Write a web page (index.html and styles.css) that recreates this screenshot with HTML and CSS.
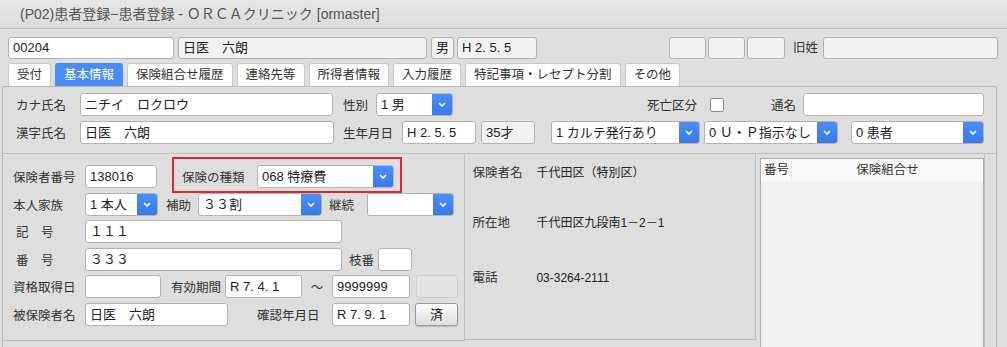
FILE: index.html
```html
<!DOCTYPE html>
<html lang="ja">
<head>
    <meta charset="UTF-8">
    <title>(P02)患者登録−患者登録 - ＯＲＣＡクリニック [ormaster]</title>
    <link rel="stylesheet" href="styles.css">
</head>
<body>
    <div class="titlebar">(P02)患者登録−患者登録 - ＯＲＣＡクリニック [ormaster]</div>

    <div class="head-row">
        <div class="field w166">00204</div>
        <div class="field ro w249 ml4">日医　六朗</div>
        <div class="field ro w23 ml4 center">男</div>
        <div class="field ro w80 ml3">H 2. 5. 5</div>
        <div class="field ro w37 ml132"></div>
        <div class="field ro w37 ml2"></div>
        <div class="field ro w38 ml2"></div>
        <div class="label ml8 w30">旧姓</div>
        <div class="field ro w175"></div>
    </div>

    <div class="tabs">
        <div class="tab">受付</div>
        <div class="tab active">基本情報</div>
        <div class="tab">保険組合せ履歴</div>
        <div class="tab">連絡先等</div>
        <div class="tab">所得者情報</div>
        <div class="tab">入力履歴</div>
        <div class="tab">特記事項・レセプト分割</div>
        <div class="tab">その他</div>
    </div>

    <div class="panel">
        <div class="top-section">
            <div class="row">
                <div class="label w64">カナ氏名</div>
                <div class="field w253">ニチイ　ロクロウ</div>
                <div class="label ml10 w33">性別</div>
                <div class="select w77"><span class="val">1 男</span><span class="btn"><svg width="8" height="5" viewBox="0 0 8 5"><path d="M1 1 L4 4 L7 1" /></svg></span></div>
                <div class="label ml194 w48">死亡区分</div>
                <div class="check ml15"></div>
                <div class="label ml47 w32">通名</div>
                <div class="field w181"></div>
            </div>
            <div class="row">
                <div class="label w64">漢字氏名</div>
                <div class="field w254">日医　六朗</div>
                <div class="label ml9 w59">生年月日</div>
                <div class="field w74">H 2. 5. 5</div>
                <div class="field ro w54 ml5">35才</div>
                <div class="select w149 ml16"><span class="val">1 カルテ発行あり</span><span class="btn"><svg width="8" height="5" viewBox="0 0 8 5"><path d="M1 1 L4 4 L7 1" /></svg></span></div>
                <div class="select w134 ml4"><span class="val">0 Ｕ・Ｐ指示なし</span><span class="btn"><svg width="8" height="5" viewBox="0 0 8 5"><path d="M1 1 L4 4 L7 1" /></svg></span></div>
                <div class="select w133 ml13"><span class="val">0 患者</span><span class="btn"><svg width="8" height="5" viewBox="0 0 8 5"><path d="M1 1 L4 4 L7 1" /></svg></span></div>
            </div>
        </div>

        <div class="bottom-section">
            <div class="pane-left">
                <div class="row">
                    <div class="label w72">保険者番号</div>
                    <div class="field w72">138016</div>
                    <div class="highlight">
                        <div class="label w75">保険の種類</div>
                        <div class="select w137"><span class="val">068 特療費</span><span class="btn"><svg width="8" height="5" viewBox="0 0 8 5"><path d="M1 1 L4 4 L7 1" /></svg></span></div>
                    </div>
                </div>
                <div class="row">
                    <div class="label w72">本人家族</div>
                    <div class="select w73"><span class="val">1 本人</span><span class="btn"><svg width="8" height="5" viewBox="0 0 8 5"><path d="M1 1 L4 4 L7 1" /></svg></span></div>
                    <div class="label ml8 w32">補助</div>
                    <div class="select w124"><span class="val">３３割</span><span class="btn"><svg width="8" height="5" viewBox="0 0 8 5"><path d="M1 1 L4 4 L7 1" /></svg></span></div>
                    <div class="label ml7 w38">継続</div>
                    <div class="select w87"><span class="val"></span><span class="btn"><svg width="8" height="5" viewBox="0 0 8 5"><path d="M1 1 L4 4 L7 1" /></svg></span></div>
                </div>
                <div class="row">
                    <div class="label w72 indent">記　号</div>
                    <div class="field w257">１１１</div>
                </div>
                <div class="row">
                    <div class="label w72 indent">番　号</div>
                    <div class="field w257">３３３</div>
                    <div class="label ml7 w29">枝番</div>
                    <div class="field w34"></div>
                </div>
                <div class="row">
                    <div class="label w72">資格取得日</div>
                    <div class="field w76"></div>
                    <div class="label ml10 w54">有効期間</div>
                    <div class="field w77">R 7. 4. 1</div>
                    <div class="label w30 center">～</div>
                    <div class="field w78">9999999</div>
                    <div class="field off w42 ml6"></div>
                </div>
                <div class="row">
                    <div class="label w72">被保険者名</div>
                    <div class="field w143">日医　六朗</div>
                    <div class="label ml29 w75">確認年月日</div>
                    <div class="field w78">R 7. 9. 1</div>
                    <div class="button ml5 w43">済</div>
                </div>
            </div>

            <div class="pane-mid">
                <div class="info first">
                    <div class="info-label">保険者名</div>
                    <div class="info-value">千代田区（特別区）</div>
                </div>
                <div class="info second">
                    <div class="info-label">所在地</div>
                    <div class="info-value">千代田区九段南1－2－1</div>
                </div>
                <div class="info third">
                    <div class="info-label">電話</div>
                    <div class="info-value">03-3264-2111</div>
                </div>
            </div>

            <div class="pane-right">
                <div class="combo-table">
                    <div class="combo-head">
                        <div class="col-no">番号</div>
                        <div class="col-name">保険組合せ</div>
                    </div>
                    <div class="combo-body"></div>
                </div>
            </div>
        </div>
    </div>
</body>
</html>
```

FILE: styles.css
```css
body {
    margin: 0;
    width: 1007px;
    height: 347px;
    overflow: hidden;
    background-color: #dedede;
    color: #333;
    font-family: "Liberation Sans", "Noto Sans CJK JP", sans-serif;
    font-size: 12.5px;
}

.titlebar {
    height: 28px;
    line-height: 28px;
    padding-left: 20px;
    font-size: 14px;
    color: #555;
    background: linear-gradient(#e6e6e6, #dcdcdc);
    border-bottom: 1px solid #c2c2c2;
}

.head-row {
    display: flex;
    height: 22px;
    margin-top: 8px;
    padding-left: 8px;
}

.row {
    display: flex;
    align-items: center;
    height: 23px;
}

.label {
    flex: none;
    white-space: nowrap;
    color: #333;
}
.indent { padding-left: 3px; box-sizing: border-box; }
.center { text-align: center; }

.field {
    flex: none;
    box-sizing: border-box;
    height: 23px;
    line-height: 21px;
    padding: 0 4px;
    background: #fff;
    border: 1px solid #b3b3b3;
    border-radius: 3px;
    color: #222;
    font-size: 13px;
    white-space: nowrap;
    overflow: hidden;
}
.head-row .field { height: 22px; line-height: 20px; }
.head-row .label { line-height: 22px; }
.field.ro { background: #f1f1f1; }
.field.off { background: #e4e4e4; border-color: #cdcdcd; }
.field.center { text-align: center; padding: 0; }

.select {
    flex: none;
    display: flex;
    box-sizing: border-box;
    height: 23px;
    background: #fff;
    border: 1px solid #b3b3b3;
    border-radius: 3px;
    overflow: hidden;
}
.select .val {
    flex: 1;
    padding-left: 4px;
    line-height: 21px;
    color: #222;
    font-size: 13px;
    white-space: nowrap;
    overflow: hidden;
}
.select .btn {
    flex: none;
    width: 20px;
    display: flex;
    align-items: center;
    justify-content: center;
    background: linear-gradient(#4b8ff7, #3779ea);
}
.select .btn path {
    fill: none;
    stroke: #fff;
    stroke-width: 1.6;
}

.check {
    flex: none;
    width: 14px;
    height: 14px;
    box-sizing: border-box;
    background: #fff;
    border: 1px solid #8c8c8c;
    border-radius: 2px;
}

.button {
    flex: none;
    box-sizing: border-box;
    height: 23px;
    line-height: 21px;
    text-align: center;
    background: linear-gradient(#fdfdfd, #dedede);
    border: 1px solid #9c9c9c;
    border-radius: 3px;
    box-shadow: 0 1px 1px rgba(0, 0, 0, 0.15);
    color: #222;
    font-size: 13px;
}

/* tabs */
.tabs {
    display: flex;
    gap: 4px;
    margin-top: 4px;
    padding-left: 8px;
}
.tab {
    height: 22px;
    line-height: 22px;
    padding: 0 8px;
    background: #fff;
    border: 1px solid #c8c8c8;
    border-bottom: none;
    border-radius: 3px 3px 0 0;
    color: #333;
}
.tab.active {
    background: #4a8cf5;
    border-color: #4a8cf5;
    color: #fff;
}

/* main panel */
.panel {
    margin: 0 10px 0 2px;
    height: 270px;
    border: 1px solid #bababa;
    border-bottom: none;
    border-radius: 3px 3px 0 0;
    overflow: hidden;
}
.top-section {
    display: flex;
    flex-direction: column;
    gap: 5px;
    padding: 6px 0 9px 13px;
}
.bottom-section {
    display: flex;
    align-items: flex-start;
    border-top: 1px solid #c0c0c0;
}

.pane-left {
    width: 452px;
    padding: 11px 0 14px 10px;
    border-right: 1px solid #c0c0c0;
    border-bottom: 1px solid #c0c0c0;
}
.pane-left .row { margin-bottom: 4.5px; }
.pane-left .row:last-child { margin-bottom: 0; }

.highlight {
    position: relative;
    display: flex;
    align-items: center;
    margin-left: 25px;
}
.highlight::before {
    content: "";
    position: absolute;
    top: -8px;
    bottom: -5px;
    left: -10px;
    right: -8px;
    border: 2px solid #e1262c;
}

.pane-mid {
    width: 283px;
    height: 185px;
    padding-left: 7px;
    border-right: 1px solid #c0c0c0;
    border-bottom: 1px solid #c0c0c0;
}
.info { display: flex; line-height: 18px; }
.info.first { margin-top: 10px; }
.info.second { margin-top: 32px; }
.info.third { margin-top: 37px; }
.info-label { width: 64px; color: #333; }
.info-value { color: #222; font-size: 12px; }

.pane-right {
    flex: 1;
    height: 200px;
    padding: 4px 0 0 4px;
    border-right: 1px solid #c0c0c0;
    margin-right: 11px;
}
.combo-table {
    width: 224px;
    height: 200px;
    box-sizing: border-box;
    border: 1px solid #acacac;
    background: #f2f2f2;
}
.combo-head {
    display: flex;
    height: 22px;
    line-height: 22px;
    background: #fafafa;
    color: #333;
}
.col-no {
    width: 31px;
    padding-left: 3px;
    box-sizing: border-box;
    border-right: 1px solid #ececec;
}
.col-name { flex: 1; text-align: center; }

/* widths and gaps */
.w23 { width: 23px; } .w29 { width: 29px; } .w30 { width: 30px; } .w32 { width: 32px; }
.w33 { width: 33px; } .w34 { width: 34px; } .w37 { width: 37px; } .w38 { width: 38px; }
.w42 { width: 42px; } .w43 { width: 43px; } .w48 { width: 48px; } .w54 { width: 54px; }
.w59 { width: 59px; } .w64 { width: 64px; } .w72 { width: 72px; } .w73 { width: 73px; }
.w74 { width: 74px; } .w75 { width: 75px; } .w76 { width: 76px; } .w77 { width: 77px; }
.w78 { width: 78px; } .w80 { width: 80px; } .w87 { width: 87px; } .w124 { width: 124px; }
.w133 { width: 133px; } .w134 { width: 134px; } .w137 { width: 137px; } .w143 { width: 143px; }
.w149 { width: 149px; } .w166 { width: 166px; } .w175 { width: 175px; } .w181 { width: 181px; }
.w249 { width: 249px; } .w253 { width: 253px; } .w254 { width: 254px; } .w257 { width: 257px; }
.ml2 { margin-left: 2px; } .ml3 { margin-left: 3px; } .ml4 { margin-left: 4px; }
.ml5 { margin-left: 5px; } .ml6 { margin-left: 6px; } .ml7 { margin-left: 7px; }
.ml8 { margin-left: 8px; } .ml9 { margin-left: 9px; } .ml10 { margin-left: 10px; }
.ml13 { margin-left: 13px; } .ml15 { margin-left: 15px; } .ml16 { margin-left: 16px; }
.ml29 { margin-left: 29px; } .ml47 { margin-left: 47px; } .ml132 { margin-left: 132px; }
.ml194 { margin-left: 194px; }
```
